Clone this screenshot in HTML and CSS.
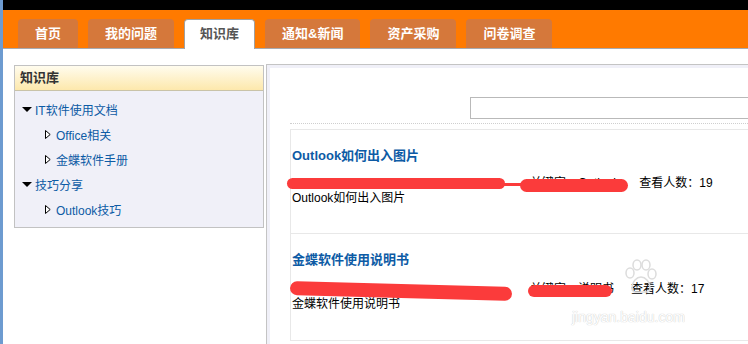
FILE: index.html
```html
<!DOCTYPE html>
<html lang="zh-CN">
<head>
<meta charset="utf-8">
<title>知识库</title>
<link rel="stylesheet" href="styles.css">
</head>
<body>
<div class="page">
  <div class="topbar"></div>
  <nav class="nav">
    <a class="tab">首页</a>
    <a class="tab">我的问题</a>
    <a class="tab active">知识库</a>
    <a class="tab">通知&amp;新闻</a>
    <a class="tab">资产采购</a>
    <a class="tab">问卷调查</a>
  </nav>
  <div class="main">
    <aside class="side">
      <div class="side-head">知识库</div>
      <ul class="tree">
        <li class="node"><span class="tri-down"></span>IT软件使用文档</li>
        <li class="leaf"><svg class="tri-right" width="6" height="9" viewBox="0 0 6 9"><polygon points="0.5,0.5 5.2,4.5 0.5,8.5" fill="#fff" stroke="#000" stroke-width="1"/></svg>Office相关</li>
        <li class="leaf"><svg class="tri-right" width="6" height="9" viewBox="0 0 6 9"><polygon points="0.5,0.5 5.2,4.5 0.5,8.5" fill="#fff" stroke="#000" stroke-width="1"/></svg>金蝶软件手册</li>
        <li class="node"><span class="tri-down"></span>技巧分享</li>
        <li class="leaf"><svg class="tri-right" width="6" height="9" viewBox="0 0 6 9"><polygon points="0.5,0.5 5.2,4.5 0.5,8.5" fill="#fff" stroke="#000" stroke-width="1"/></svg>Outlook技巧</li>
      </ul>
    </aside>
    <section class="content">
      <div class="inner">
        <input class="search" type="text">
        <div class="dots"></div>
        <div class="list">
          <div class="item">
            <div class="title">Outlook如何出入图片</div>
            <div class="meta">
              <span class="author"></span>
              <span class="kw">关键字：Outlook</span>
              <span class="views">查看人数：19</span>
              <span class="red r1a"></span>
              <span class="red r1c"></span>
              <span class="red r1b"></span>
            </div>
            <div class="desc">Outlook如何出入图片</div>
          </div>
          <div class="item last">
            <div class="title">金蝶软件使用说明书</div>
            <div class="meta">
              <span class="author"></span>
              <span class="kw">关键字：说明书</span>
              <span class="views v2">查看人数：17</span>
              <span class="red r2a"></span>
              <span class="red r2b"></span>
            </div>
            <div class="desc">金蝶软件使用说明书</div>
            <div class="watermark">
              <svg class="paw" width="36" height="36" viewBox="0 0 36 36">
                <g fill="none" stroke="#dcdcdc" stroke-width="1.5">
                  <ellipse cx="8" cy="14" rx="4" ry="5"/>
                  <ellipse cx="15" cy="6" rx="4" ry="5"/>
                  <ellipse cx="24" cy="6" rx="4" ry="5"/>
                  <ellipse cx="30" cy="15" rx="4" ry="5"/>
                  <path d="M10 30 C10 22 15 18 19 18 C23 18 28 22 28 30 C28 34 22 33 19 33 C15 33 10 34 10 30 Z"/>
                </g>
              </svg>
              <span class="wm-url">jingyan.baidu.com</span>
            </div>
          </div>
        </div>
      </div>
    </section>
  </div>
</div>
</body>
</html>
```
FILE: styles.css
```css
html, body {
  margin: 0;
  padding: 0;
  background: #fff;
}
body {
  overflow: hidden;
  width: 748px;
  height: 344px;
  font-family: "Liberation Sans", "Noto Sans CJK SC", sans-serif;
  font-size: 12px;
  color: #000;
}
.page {
  border-left: 3px solid #6d9bd0;
  height: 344px;
  box-sizing: border-box;
  overflow: hidden;
}
.topbar {
  height: 10px;
  background: #000;
}
.nav {
  display: flex;
  align-items: flex-end;
  gap: 10px;
  height: 39px;
  box-sizing: border-box;
  padding: 10px 0 0 15px;
  background: #ff7a00;
  border-bottom: 1px solid #a7aab0;
}
.tab {
  display: block;
  height: 29px;
  line-height: 29px;
  padding: 0 17px;
  background: #d5783b;
  color: #fff;
  font-weight: bold;
  font-size: 13px;
  border-radius: 4px 4px 0 0;
  white-space: nowrap;
}
.tab.active {
  background: #fff;
  color: #555;
  border: 1px solid #a0a0a0;
  border-bottom: none;
  height: 30px;
  line-height: 28px;
  box-sizing: border-box;
  margin-bottom: -1px;
  padding: 0 15px;
}
.main {
  display: flex;
  align-items: flex-start;
  gap: 2px;
  margin-top: 15px;
}
.side {
  flex: none;
  width: 250px;
  box-sizing: border-box;
  margin: 1px 0 0 11px;
  border: 1px solid #c2c2c2;
  background: #f0f0f8;
}
.side-head {
  height: 24px;
  line-height: 24px;
  padding-left: 5px;
  font-size: 13px;
  font-weight: bold;
  color: #333;
  background: linear-gradient(#fffcee, #fde8ac);
  border-bottom: 1px solid #c9c3a8;
}
.tree {
  list-style: none;
  margin: 0;
  padding: 6px 0 5px;
}
.tree li {
  display: flex;
  align-items: center;
  height: 25px;
  color: #0d5ba5;
  font-size: 12px;
}
.node {
  padding-left: 7px;
}
.tri-down {
  width: 0;
  height: 0;
  border-left: 5px solid transparent;
  border-right: 5px solid transparent;
  border-top: 5px solid #000;
  margin-right: 3px;
}
.leaf {
  padding-left: 30px;
}
.tri-right {
  margin-right: 5px;
  display: block;
}
.content {
  flex: none;
  width: 480px;
  border-top: 1px solid #c4c4c4;
  border-left: 1px solid #c4c4c4;
  background: #f0f0f8;
  padding: 3px 0 0 3px;
}
.inner {
  background: #fff;
  height: 272px;
  padding: 29px 0 0 20px;
}
.search {
  display: block;
  margin: 0 0 0 180px;
  width: 300px;
  height: 22px;
  box-sizing: border-box;
  border: 1px solid #b9b9b9;
  padding: 0;
  background: #fff;
  outline: none;
}
.dots {
  margin-top: 4px;
  border-top: 1px dotted #cfcfcf;
}
.list {
  margin-top: 5px;
}
.item {
  position: relative;
  border-top: 1px solid #e8e8e8;
  border-left: 1px solid #e8e8e8;
  padding: 18px 0 27px 1px;
}
.item.last {
  border-bottom: 1px solid #e8e8e8;
  padding-bottom: 28px;
}
.title {
  line-height: 16px;
  font-weight: bold;
  color: #0d5ba5;
  font-size: 13px;
}
.meta {
  position: relative;
  display: flex;
  margin-top: 12px;
  line-height: 15px;
  white-space: nowrap;
}
.last .meta {
  margin-top: 14px;
}
.author {
  width: 238px;
}
.kw {
  color: #000;
}
.views {
  margin-left: 20px;
}
.views.v2 {
  margin-left: 17px;
}
.red {
  position: absolute;
  background: #fb3b3b;
  border-radius: 7px;
}
.r1a { left: -5px; top: 2px; width: 218px; height: 11px; }
.r1c { left: 208px; top: 7px; width: 24px; height: 3px; border-radius: 1px; }
.r1b { left: 228px; top: 3px; width: 108px; height: 13px; }
.r2a { left: -2px; top: 2px; width: 222px; height: 14px; transform: rotate(1.5deg); }
.r2b { left: 236px; top: 3px; width: 84px; height: 12px; }
.desc {
  line-height: 15px;
  font-size: 12px;
}
.watermark {
  position: absolute;
  left: 281px;
  top: 25px;
  width: 140px;
  height: 70px;
  pointer-events: none;
}
.paw {
  position: absolute;
  left: 50px;
  top: 0;
}
.wm-url {
  position: absolute;
  left: 0;
  top: 51px;
  font-size: 14px;
  line-height: 14px;
  color: #fff;
  text-shadow: 0 0 1px #cfcfcf, 0 0 1px #cfcfcf;
  white-space: nowrap;
}
```
